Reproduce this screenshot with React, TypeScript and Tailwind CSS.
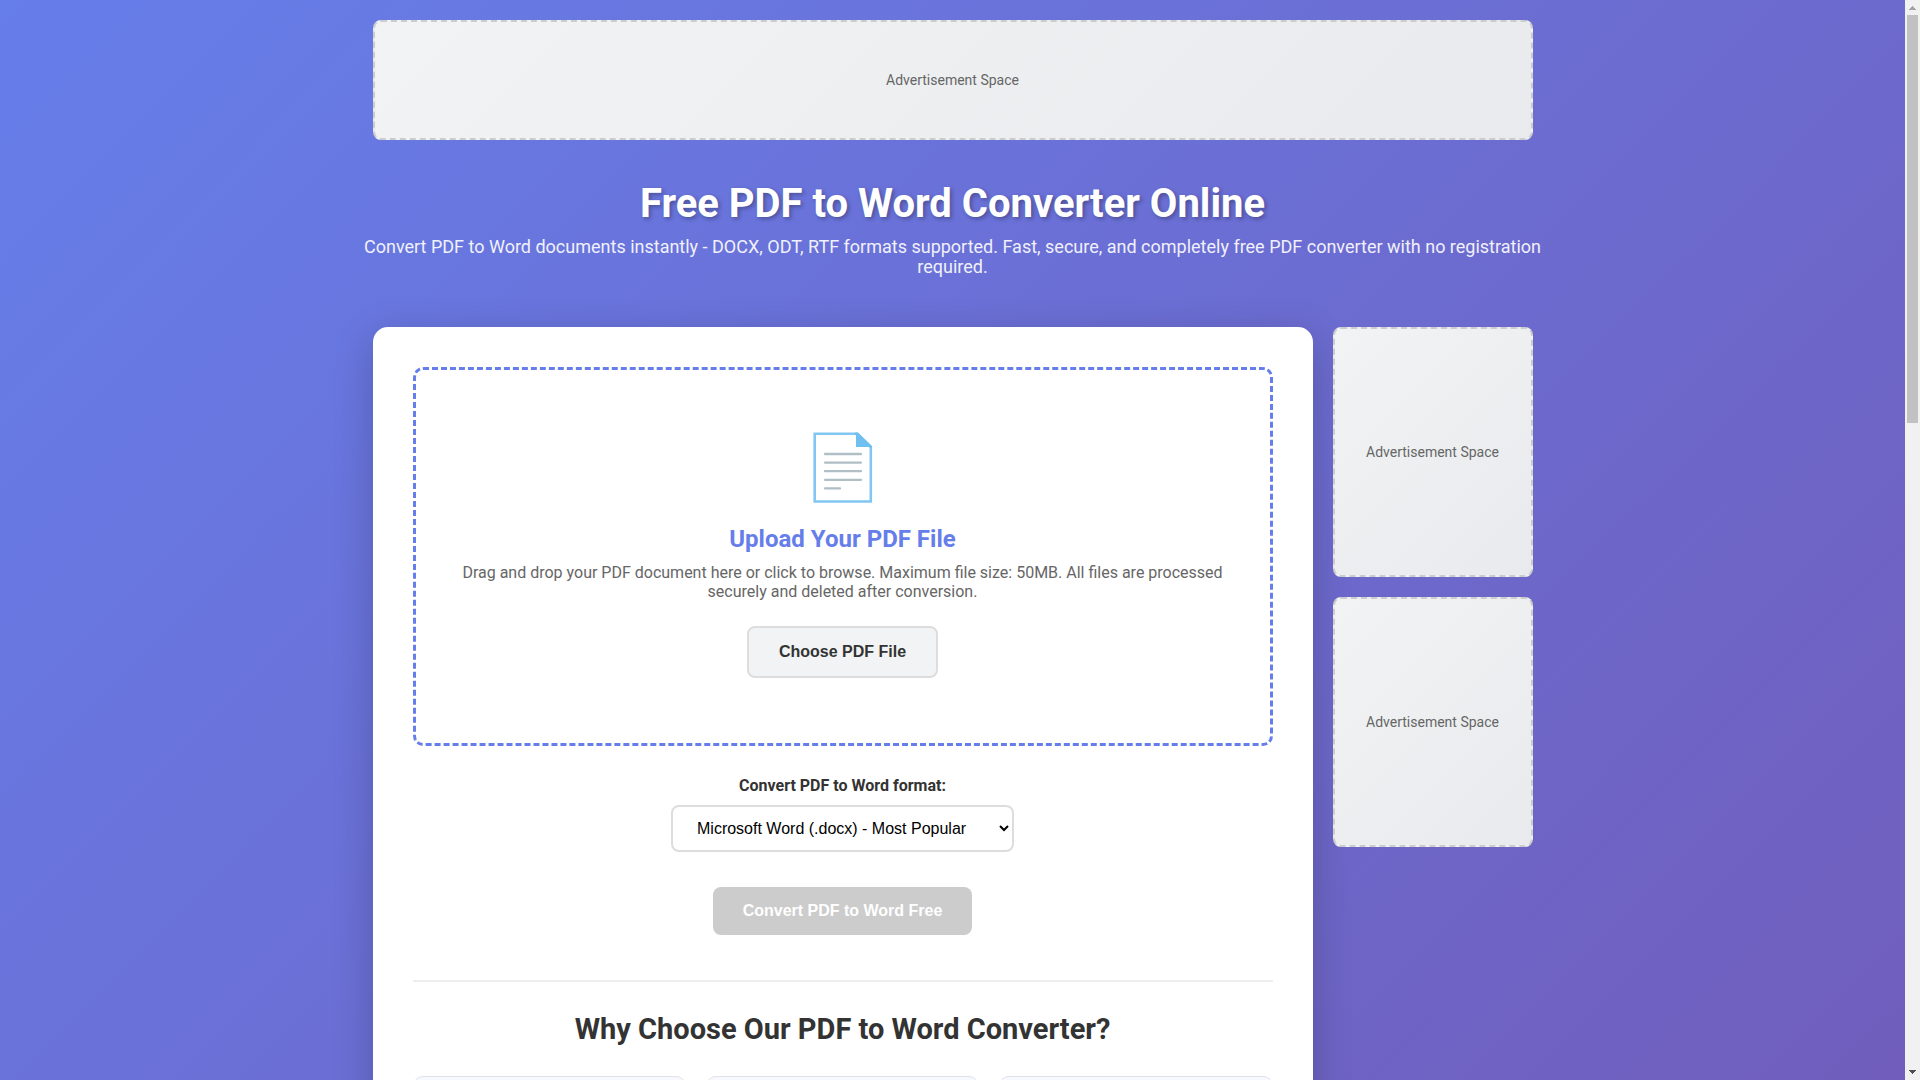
import { useState } from "react";
import clsx from "clsx";

const FORMATS = [
  { value: "docx", label: "Microsoft Word (.docx) - Most Popular" },
];

const FEATURE_IDS = ["quality", "speed", "privacy"];

type AdSlotProps = {
  className: string;
};

function AdSlot({ className }: AdSlotProps) {
  return (
    <div
      className={clsx(
        "flex items-center justify-center rounded-lg border-2 border-dashed border-[#cccccc] bg-linear-[135deg,#f1f3f4,#e8eaed] text-sm text-[#666666]",
        className,
      )}
    >
      Advertisement Space
    </div>
  );
}

function DocumentIcon() {
  return (
    <svg width="60" height="72" viewBox="0 0 60 72" aria-hidden="true">
      <path d="M1.7 1.7H44L57.8 15V69.5H1.7Z" fill="#ffffff" stroke="#82c7f3" strokeWidth="2.6" />
      <path d="M43 .4H45L59 14V17C58 15.4 56.5 15 54 15H43V5C43 2.5 42.5 2 41 1Z" fill="#6fbff0" />
      <path
        d="M12 22H48M12 30.6H48M12 39.2H48M12 47.8H48M12 56.4H27"
        stroke="#b0bec5"
        strokeWidth="2.3"
        strokeLinecap="round"
      />
    </svg>
  );
}

function UploadArea() {
  return (
    <div className="flex flex-col items-center rounded-[10px] border-3 border-dashed border-[#667eea] px-10 pt-15 pb-[65px] text-center">
      <div className="flex h-[75px] items-center">
        <DocumentIcon />
      </div>
      <h2 className="mt-5 text-2xl leading-7 font-bold text-[#667eea]">Upload Your PDF File</h2>
      <p className="mt-2.5 leading-[19px] text-[#666666]">
        Drag and drop your PDF document here or click to browse. Maximum file size: 50MB. All files
        are processed securely and deleted after conversion.
      </p>
      <button
        type="button"
        className="mt-[25px] rounded-lg border-2 border-[#dddddd] bg-[#f1f3f4] px-[30px] py-[15px] font-['Liberation_Sans',Arial,sans-serif] leading-[18px] font-bold text-[#333333]"
      >
        Choose PDF File
      </button>
    </div>
  );
}

function FormatForm() {
  const [format, setFormat] = useState("docx");

  return (
    <form className="mt-[30px] flex flex-col items-center">
      <label htmlFor="format" className="leading-[19px] font-bold text-[#333333]">
        Convert PDF to Word format:
      </label>
      <select
        id="format"
        value={format}
        onChange={(event) => setFormat(event.target.value)}
        className="mt-2.5 h-[47px] w-[343px] max-w-full rounded-lg border-2 border-[#dddddd] bg-white px-5 py-3 font-['Liberation_Sans',Arial,sans-serif] text-base leading-[19px] text-black"
      >
        {FORMATS.map((item) => (
          <option key={item.value} value={item.value}>
            {item.label}
          </option>
        ))}
      </select>
      <button
        type="submit"
        disabled
        className="mt-[35px] rounded-lg bg-[#cccccc] px-[30px] py-[15px] font-['Liberation_Sans',Arial,sans-serif] leading-[18px] font-bold text-white"
      >
        Convert PDF to Word Free
      </button>
    </form>
  );
}

function Features() {
  return (
    <section className="mt-[45px] border-t-2 border-[#eeeeee] pt-[30px]">
      <h2 className="text-center text-[29px] leading-[34px] font-bold text-[#333333]">
        Why Choose Our PDF to Word Converter?
      </h2>
      <div className="mt-[30px] grid grid-cols-3 gap-5">
        {FEATURE_IDS.map((id) => (
          <div key={id} className="h-60 rounded-[10px] border border-[#e0e0e8] bg-[#f8f9ff]" />
        ))}
      </div>
    </section>
  );
}

function Scrollbar() {
  return (
    <div aria-hidden="true" className="flex w-[15px] shrink-0 flex-col items-center bg-[#f1f1f1]">
      <svg width="15" height="15" viewBox="0 0 15 15" shapeRendering="crispEdges">
        <path d="M7 6h1v1h1v1h1v1h1v1H4V9h1V8h1V7h1z" fill="#a3a3a3" />
      </svg>
      <div className="flex w-full flex-1 justify-center">
        <div className="h-102 w-[11px] bg-[#c1c1c1]" />
      </div>
      <svg width="15" height="15" viewBox="0 0 15 15" shapeRendering="crispEdges">
        <path d="M4 5h7v1h-1v1H9v1H8v1H7V8H6V7H5V6H4z" fill="#505050" />
      </svg>
    </div>
  );
}

export default function App() {
  return (
    <div className="flex h-screen overflow-hidden font-[Roboto,sans-serif] text-base">
      <div className="min-w-0 flex-1 overflow-hidden bg-linear-[135deg,#667eea,#764ba2] bg-size-[100%_2780px] bg-no-repeat">
        <div className="mx-auto max-w-[1200px] p-5">
          <AdSlot className="h-30" />
          <header className="py-10 text-center text-white">
            <h1 className="text-[40px] leading-[47px] font-bold text-shadow-[2px_2px_4px_rgba(0,0,0,0.3)]">
              Free PDF to Word Converter Online
            </h1>
            <p className="-mx-2.5 my-2.5 text-[18px] leading-5 opacity-90">
              Convert PDF to Word documents instantly - DOCX, ODT, RTF formats supported. Fast,
              secure, and completely free PDF converter with no registration required.
            </p>
          </header>
          <div className="flex items-start gap-5">
            <main className="min-w-0 flex-1 rounded-[15px] bg-white p-10 shadow-[0_10px_40px_rgba(0,0,0,0.2)]">
              <UploadArea />
              <FormatForm />
              <Features />
            </main>
            <aside className="flex w-50 shrink-0 flex-col gap-5">
              <AdSlot className="h-[250px]" />
              <AdSlot className="h-[250px]" />
            </aside>
          </div>
        </div>
      </div>
      <Scrollbar />
    </div>
  );
}
